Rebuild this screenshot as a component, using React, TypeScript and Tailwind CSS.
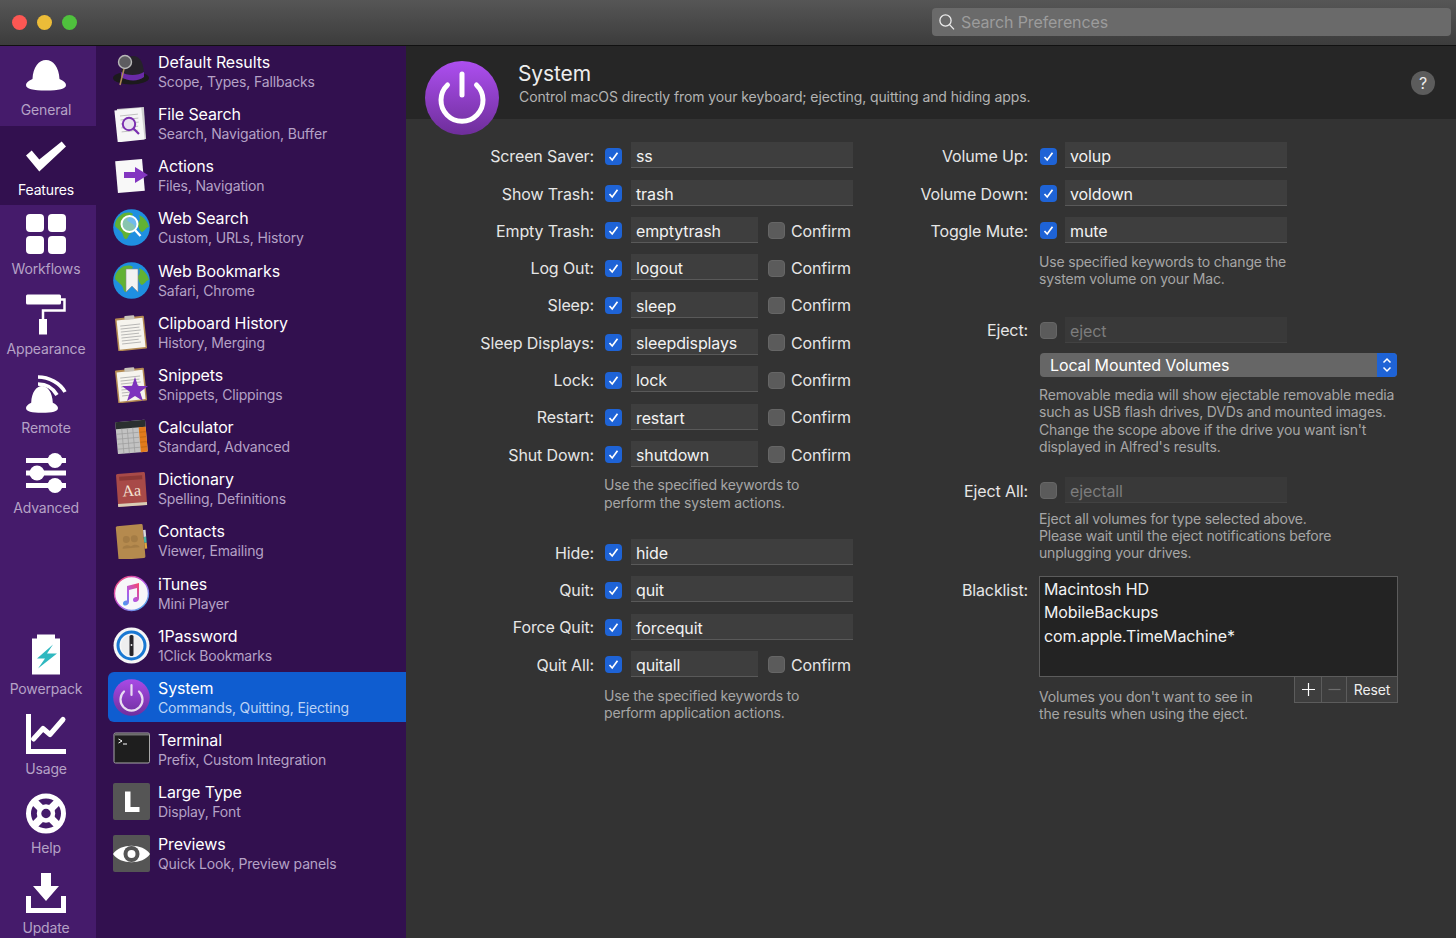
import React from 'react';

const HAT = 'M6.5 19C7 7 13 0 20 0C27 0 33 7 33.5 19C38 21 40 23 40 25C40 29 33 30.5 20 30.5C7 30.5 0 29 0 25C0 23 2 21 6.5 19Z';

const GeneralIcon = () => <path d={HAT} fill="white" transform="translate(3 8)" />;
const FeaturesIcon = () => <polygon points="3,23.5 8.7,18.5 16.3,27.5 38.7,9.5 43,14.5 16.3,39.5" fill="white" />;
const WorkflowsIcon = () => (
  <g fill="white">
    <rect x="3" y="3" width="18" height="18" rx="4" />
    <rect x="25" y="3" width="18" height="18" rx="4" />
    <rect x="3" y="25" width="18" height="18" rx="4" />
    <rect x="25" y="25" width="18" height="18" rx="4" />
  </g>
);
const AppearanceIcon = () => (
  <g>
    <rect x="3" y="3.5" width="35" height="10" rx="1.5" fill="white" />
    <path d="M38 8.5H41.5V19.5H20V28" fill="none" stroke="white" strokeWidth="2.5" />
    <rect x="16" y="28" width="8" height="15.5" fill="white" />
  </g>
);
const RemoteIcon = () => (
  <g>
    <path d={HAT} fill="white" transform="translate(3 16) scale(.8 .88)" />
    <path d="M15 7C26 7 37 13 42 22" fill="none" stroke="white" strokeWidth="3.6" />
    <path d="M15 14C23 14 30 18 34 25" fill="none" stroke="white" strokeWidth="3.6" />
  </g>
);
const AdvancedIcon = () => (
  <g fill="white">
    <rect x="3" y="8" width="40" height="5" />
    <rect x="3" y="20.5" width="40" height="5" />
    <rect x="3" y="33" width="40" height="5" />
    <circle cx="32" cy="10.5" r="7.5" />
    <circle cx="14" cy="23" r="7.5" />
    <circle cx="32" cy="35.5" r="7.5" />
  </g>
);
const PowerpackIcon = () => (
  <g>
    <path d="M14 3.5H32V7.5H37V43.5H9V7.5H14Z" fill="white" />
    <polygon points="30,13.5 14,27.5 22,27.5 15,37.5 34,22.5 24,22.5" fill="#2fb8c0" />
  </g>
);
const UsageIcon = () => (
  <g>
    <path d="M5.5 3V40.5H43" fill="none" stroke="white" strokeWidth="5" />
    <path d="M10.5 28L20 17.5L27 23.5L40 8.5" fill="none" stroke="white" strokeWidth="5" strokeLinecap="round" strokeLinejoin="round" />
  </g>
);
const HelpIcon = () => (
  <g fill="none" stroke="white">
    <circle cx="23" cy="23.5" r="17.5" strokeWidth="5" />
    <circle cx="23" cy="23.5" r="7" strokeWidth="4.5" />
    <path d="M11 11.5L17.5 18M35 11.5L28.5 18M11 35.5L17.5 29M35 35.5L28.5 29" strokeWidth="7.5" />
  </g>
);
const UpdateIcon = () => (
  <g>
    <polygon points="18,3 28,3 28,16 36,16 23,31 10,16 18,16" fill="white" />
    <path d="M5.5 26V40.5H40.5V26" fill="none" stroke="white" strokeWidth="5" />
  </g>
);

function Globe({ children }: { children?: React.ReactNode }) {
  return (
    <g>
      <circle cx="18.5" cy="18.5" r="18.3" fill="#1f8fe0" />
      <path d="M8 6C12 3 17 3 20 5C19 8 15 8 14 11C16 14 21 14 22 18C22 23 17 23 15 28C13 32 11 30 10 26C9 22 4 20 2 17C2 12 4 9 8 6Z" fill="#62b233" />
      <path d="M26 6C31 8 35 13 36 18C33 18 32 22 29 23C26 22 26 17 24 15C26 13 28 11 26 6Z" fill="#62b233" />
      {children}
    </g>
  );
}

function Clipboard({ children }: { children?: React.ReactNode }) {
  return (
    <g transform="rotate(-6 18 19)">
      <rect x="3.5" y="3" width="29" height="33" rx="1" fill="#b48a52" />
      <rect x="5" y="5" width="26" height="29.5" fill="#f6f4ee" />
      <path d="M8 11H28M8 14H27M8 17H28M8 20H26M8 23H28M8 26H25M8 29H27" stroke="#a0a0a0" strokeWidth=".7" />
      <rect x="13" y="1.5" width="10" height="4" rx="1" fill="#c9c4bb" />
      {children}
    </g>
  );
}

const appIcons: Record<string, React.ReactNode> = {
  results: (
    <g>
      <ellipse cx="18" cy="25" rx="18" ry="6.5" fill="#1c1a1c" />
      <path d="M8 24C8 10 12 3 20 3C28 3 31 11 31 24C24 28 14 28 8 24Z" fill="#26222a" />
      <path d="M8 19C14 23 25 23 31 19V24C25 29 14 28 8 24Z" fill="#6a2aa8" />
      <path d="M11 16L7 32" stroke="#b08a58" strokeWidth="1.6" />
      <circle cx="12" cy="9" r="6.5" fill="#5d5c60" stroke="#b8b8b8" strokeWidth="1.4" />
    </g>
  ),
  file: (
    <g>
      <rect x="5" y="3" width="27" height="32" fill="#cfcfcf" transform="rotate(-4 18 19)" />
      <rect x="3" y="4" width="27" height="32" fill="#f6f6f6" transform="rotate(-6 17 20)" />
      <path d="M8 10H26M8 14H26M8 18H26M8 22H25M8 26H24" stroke="#b5b5b5" strokeWidth=".8" transform="rotate(-6 17 20)" />
      <circle cx="16" cy="19" r="6.2" fill="#e9e2f0" stroke="#7b2fb0" strokeWidth="2" />
      <path d="M20.5 23.5L26 29" stroke="#7b2fb0" strokeWidth="2.2" />
    </g>
  ),
  actions: (
    <g>
      <rect x="3.5" y="3" width="27" height="32" fill="#f8f8f8" transform="rotate(-5 17 19)" />
      <polygon points="11,15 22,15 22,10 35,18 22,26 22,21 11,21" fill="#8336c0" />
    </g>
  ),
  web: (
    <Globe>
      <circle cx="16.5" cy="15" r="8" fill="#9ccff2" fillOpacity=".65" stroke="white" strokeWidth="2" />
      <path d="M22 21L27.5 27" stroke="white" strokeWidth="2.4" />
    </Globe>
  ),
  bookmarks: (
    <Globe>
      <polygon points="13,7 25,7 25,30 19,24 13,30" fill="#f2f2f2" stroke="#8a8a8a" strokeWidth=".6" />
    </Globe>
  ),
  clipboard: <Clipboard />,
  snippets: (
    <g>
      <Clipboard />
      <polygon points="22,11 25,20 35,20 27,26 30,35 22,30 14,35 17,26 9,20 19,20" fill="#7d32bd" />
    </g>
  ),
  calculator: (
    <g transform="rotate(-5 18 19)">
      <rect x="3.5" y="3" width="30" height="32" rx="1" fill="#c2c2c2" />
      <rect x="3.5" y="3" width="30" height="7" fill="#2a2f2f" />
      <rect x="26.5" y="10" width="7" height="25" fill="#e27a1c" />
      <path d="M4 15H26M4 20H26M4 25H26M4 30H26M9.5 10V35M15 10V35M20.5 10V35" stroke="#9c9c9c" strokeWidth=".7" />
      <path d="M27 15H33M27 20H33M27 25H33M27 30H33" stroke="#b86510" strokeWidth=".7" />
    </g>
  ),
  dictionary: (
    <g transform="rotate(-4 18 19)">
      <rect x="4" y="3" width="29" height="33" rx="1.5" fill="#a84a48" />
      <rect x="4" y="33" width="29" height="3" fill="#d9cdb5" />
      <rect x="7" y="6" width="23" height="4" fill="#8c3836" />
      <text x="18.5" y="26" textAnchor="middle" fontFamily="Liberation Serif, serif" fontSize="16" fill="#f6e4d4">Aa</text>
    </g>
  ),
  contacts: (
    <g transform="rotate(-5 18 19)">
      <rect x="4" y="3" width="27" height="34" rx="1.5" fill="#b58a4e" />
      <rect x="31" y="9" width="2.5" height="7" fill="#d9d9d9" />
      <rect x="31" y="16" width="2.5" height="6" fill="#4db3a2" />
      <rect x="31" y="22" width="2.5" height="6" fill="#e0a83a" />
      <circle cx="13.5" cy="17" r="3.5" fill="#a47c45" />
      <circle cx="21.5" cy="17" r="3.5" fill="#a47c45" />
      <path d="M9 26C9 22 18 22 18 26ZM17 26C17 22 26 22 26 26Z" fill="#a47c45" />
    </g>
  ),
  itunes: (
    <g>
      <defs>
        <linearGradient id="itRing" x1="0" y1="0" x2="1" y2="1">
          <stop offset="0" stopColor="#fa4d6b" />
          <stop offset=".5" stopColor="#b94fe0" />
          <stop offset="1" stopColor="#37c8f5" />
        </linearGradient>
        <linearGradient id="itNote" x1="1" y1="0" x2="0" y2="1">
          <stop offset="0" stopColor="#fb4468" />
          <stop offset=".55" stopColor="#b05be6" />
          <stop offset="1" stopColor="#3ba3f0" />
        </linearGradient>
      </defs>
      <circle cx="18.5" cy="18.5" r="17" fill="#f7f7f9" stroke="url(#itRing)" strokeWidth="1.4" />
      <path d="M14 11L26 8V23.5C26 26 23.5 27.5 21.5 27C19.5 26.5 19.5 23.5 21.5 22.5C22.5 22 23.5 22 24 22V13L16 15V27C16 29.5 13.5 31 11.5 30.5C9.5 30 9.5 27 11.5 26C12.5 25.5 13.5 25.5 14 25.5Z" fill="url(#itNote)" />
    </g>
  ),
  onepassword: (
    <g>
      <circle cx="18.5" cy="18.5" r="18" fill="#f6f6f6" />
      <circle cx="18.5" cy="18.5" r="13.5" fill="none" stroke="#1a78d2" strokeWidth="3" />
      <circle cx="18.5" cy="18.5" r="10.5" fill="#eeeeee" />
      <rect x="16.5" y="8" width="4" height="21" rx="1.5" fill="#27252a" />
      <circle cx="18.5" cy="18" r=".9" fill="#eeeeee" />
    </g>
  ),
  system: (
    <g>
      <defs>
        <linearGradient id="pwrSmall" x1="0" y1="0" x2="0" y2="1">
          <stop offset="0" stopColor="#a94ae6" />
          <stop offset="1" stopColor="#6f2f9e" />
        </linearGradient>
      </defs>
      <circle cx="18.5" cy="18.5" r="18.3" fill="url(#pwrSmall)" />
      <path d="M11 12.5A11 11 0 1 0 26 12.5" fill="none" stroke="#e8dcf2" strokeWidth="2.2" strokeLinecap="round" />
      <path d="M18.5 6V16" stroke="#e8dcf2" strokeWidth="2.2" strokeLinecap="round" />
    </g>
  ),
  terminal: (
    <g>
      <rect x="1" y="2" width="35.5" height="30" rx="1.5" fill="#1e1e1e" stroke="#a8a8a8" strokeWidth="1" />
      <rect x="1.5" y="2.5" width="34.5" height="2" fill="#6f6f6f" />
      <path d="M5.5 8L9 10L5.5 12M10 13H14" fill="none" stroke="white" strokeWidth="1" />
    </g>
  ),
  largetype: (
    <g>
      <rect x="0" y="0" width="37" height="37" rx="2" fill="#555555" />
      <path d="M12 8.5H17.5V24H26.5V29H12Z" fill="white" />
    </g>
  ),
  previews: (
    <g>
      <rect x="0" y="0" width="37" height="37" rx="2" fill="#555555" />
      <path d="M0 19C7 8 30 8 37 19C30 30 7 30 0 19Z" fill="white" />
      <circle cx="18.5" cy="19" r="8" fill="#555555" />
      <circle cx="18.5" cy="19" r="4" fill="white" />
    </g>
  ),
};

const topNav = [
  { label: 'General', icon: <GeneralIcon /> },
  { label: 'Features', icon: <FeaturesIcon />, active: true },
  { label: 'Workflows', icon: <WorkflowsIcon /> },
  { label: 'Appearance', icon: <AppearanceIcon /> },
  { label: 'Remote', icon: <RemoteIcon /> },
  { label: 'Advanced', icon: <AdvancedIcon /> },
];

const bottomNav = [
  { label: 'Powerpack', icon: <PowerpackIcon /> },
  { label: 'Usage', icon: <UsageIcon /> },
  { label: 'Help', icon: <HelpIcon /> },
  { label: 'Update', icon: <UpdateIcon /> },
];

const features = [
  { id: 'results', title: 'Default Results', sub: 'Scope, Types, Fallbacks' },
  { id: 'file', title: 'File Search', sub: 'Search, Navigation, Buffer' },
  { id: 'actions', title: 'Actions', sub: 'Files, Navigation' },
  { id: 'web', title: 'Web Search', sub: 'Custom, URLs, History' },
  { id: 'bookmarks', title: 'Web Bookmarks', sub: 'Safari, Chrome' },
  { id: 'clipboard', title: 'Clipboard History', sub: 'History, Merging' },
  { id: 'snippets', title: 'Snippets', sub: 'Snippets, Clippings' },
  { id: 'calculator', title: 'Calculator', sub: 'Standard, Advanced' },
  { id: 'dictionary', title: 'Dictionary', sub: 'Spelling, Definitions' },
  { id: 'contacts', title: 'Contacts', sub: 'Viewer, Emailing' },
  { id: 'itunes', title: 'iTunes', sub: 'Mini Player' },
  { id: 'onepassword', title: '1Password', sub: '1Click Bookmarks' },
  { id: 'system', title: 'System', sub: 'Commands, Quitting, Ejecting', selected: true },
  { id: 'terminal', title: 'Terminal', sub: 'Prefix, Custom Integration' },
  { id: 'largetype', title: 'Large Type', sub: 'Display, Font' },
  { id: 'previews', title: 'Previews', sub: 'Quick Look, Preview panels' },
];

function RailItem({ label, icon, active }: { label: string; icon: React.ReactNode; active?: boolean }) {
  return (
    <div className={active ? 'h-[79.5px] pr-1 pt-[6px] flex flex-col items-center bg-[#32104f]' : 'h-[79.5px] pr-1 pt-[6px] flex flex-col items-center'}>
      <svg width="46" height="46" viewBox="0 0 46 46" className="shrink-0">{icon}</svg>
      <span className={active ? 'mt-[3px] text-[14px] leading-[18px] tracking-[-0.16px] text-white' : 'mt-[3px] text-[14px] leading-[18px] tracking-[-0.16px] text-[#b5a2c6]'}>{label}</span>
    </div>
  );
}

function FeatureRow({ id, title, sub, selected }: { id: string; title: string; sub: string; selected?: boolean }) {
  return (
    <div className="h-[52.17px] ml-3 pb-[1.2px] flex items-center">
      <div className={selected ? 'w-full h-[50px] flex items-center pl-[5px] bg-[#0f5dd0] rounded-l-md' : 'w-full h-[50px] flex items-center pl-[5px]'}>
        <svg width="37" height="37" viewBox="0 0 37 37" className="shrink-0">{appIcons[id]}</svg>
        <div className="ml-2 flex flex-col">
          <span className="text-[16px] leading-[20px] text-white">{title}</span>
          <span className={selected ? 'mt-[1px] text-[14px] leading-[18px] tracking-[-0.16px] text-[#bcd3f5]' : 'mt-[1px] text-[14px] leading-[18px] tracking-[-0.16px] text-[#b5a2c6]'}>{sub}</span>
        </div>
      </div>
    </div>
  );
}

function Checkbox({ checked }: { checked?: boolean }) {
  return (
    <span className={checked ? 'w-[17px] h-[17px] rounded-[4px] bg-[#1e63d6] flex items-center justify-center shrink-0' : 'block w-[17px] h-[17px] rounded-[4px] bg-[#5b5b5b] border border-[#666666] shrink-0'}>
      {checked && (
        <svg width="13" height="13" viewBox="0 0 13 13">
          <path d="M2.5 7L5.2 10L10.5 2.8" fill="none" stroke="white" strokeWidth="1.7" />
        </svg>
      )}
    </span>
  );
}

function TextField({ value, short, disabled }: { value: string; short?: boolean; disabled?: boolean }) {
  const width = short ? 'w-[127px]' : 'w-[222px]';
  const tone = disabled ? 'text-[#7d7d7d] bg-[#393939] border-[#424242]' : 'text-[#f2f2f2] bg-[#3e3e3e] border-[#595959]';
  return <div className={width + ' ' + tone + ' h-[26px] mb-[1.5px] pl-[5px] border-b text-[16px] leading-[28px]'}>{value}</div>;
}

function LeftRow({ label, value, confirm }: { label: string; value: string; confirm?: boolean }) {
  return (
    <div className="h-[37.3px] flex items-center">
      <span className="w-[188px] text-right text-[16px] text-[#e6e6e6]">{label}</span>
      <span className="ml-[11px] mr-[9px]"><Checkbox checked /></span>
      <TextField value={value} short={confirm} />
      {confirm && (
        <div className="ml-[10px] flex items-center">
          <Checkbox />
          <span className="ml-[6px] text-[16px] text-[#e6e6e6]">Confirm</span>
        </div>
      )}
    </div>
  );
}

function RightRow({ label, value, checked = true }: { label: string; value: string; checked?: boolean }) {
  return (
    <div className="h-[37.3px] flex items-center">
      <span className="w-[129px] text-right text-[16px] text-[#e6e6e6]">{label}</span>
      <span className="ml-[12px] mr-[8px]"><Checkbox checked={checked} /></span>
      <TextField value={value} disabled={!checked} />
    </div>
  );
}

function Help({ className, children }: { className: string; children: React.ReactNode }) {
  return <p className={className + ' text-[14px] leading-[17.3px] tracking-[-0.17px] text-[#a6a6a6] whitespace-pre-line'}>{children}</p>;
}

export default function App() {
  return (
    <div className="w-[1456px] h-[938px] overflow-hidden flex flex-col bg-[#333333] font-[Inter,sans-serif] tracking-[-0.12px]">
      <header className="h-[46px] shrink-0 flex items-center pl-3 pr-[5px] pb-[1px] border-b border-[#111111] bg-gradient-to-b from-[#565656] to-[#3c3c3c]">
        <span className="w-[15px] h-[15px] rounded-full bg-[#fc5753]" />
        <span className="ml-[10px] w-[15px] h-[15px] rounded-full bg-[#ecbc38]" />
        <span className="ml-[10px] w-[15px] h-[15px] rounded-full bg-[#4fc13d]" />
        <div className="ml-auto w-[519px] h-[28px] rounded-[4px] bg-[#6a6a6a] flex items-center pl-[6px]">
          <svg width="18" height="18" viewBox="0 0 18 18" className="shrink-0">
            <circle cx="7.5" cy="7.5" r="5.6" fill="none" stroke="#ececec" strokeWidth="1.3" />
            <path d="M11.6 11.6L16 16.4" stroke="#ececec" strokeWidth="1.3" />
          </svg>
          <span className="ml-[5px] text-[16px] text-[#9c9c9c]">Search Preferences</span>
        </div>
      </header>

      <div className="flex-1 flex min-h-0">
        <nav className="w-[96px] shrink-0 flex flex-col justify-between bg-[#451b6b]">
          <div>
            {topNav.map((item) => <RailItem key={item.label} {...item} />)}
          </div>
          <div className="-mb-[5px]">
            {bottomNav.map((item) => <RailItem key={item.label} {...item} />)}
          </div>
        </nav>

        <aside className="w-[310px] shrink-0 bg-[#32104f]">
          {features.map((item) => <FeatureRow key={item.id} {...item} />)}
        </aside>

        <main className="flex-1 min-w-0 flex flex-col">
          <div className="h-[73px] shrink-0 flex items-start bg-[#262626]">
            <svg width="74" height="74" viewBox="0 0 74 74" className="ml-[19px] mt-[15px] shrink-0 relative">
              <defs>
                <linearGradient id="pwrBig" x1="0" y1="0" x2="0" y2="1">
                  <stop offset="0" stopColor="#ad4ff0" />
                  <stop offset="1" stopColor="#6e2e9a" />
                </linearGradient>
              </defs>
              <circle cx="37" cy="37" r="37" fill="url(#pwrBig)" />
              <path d="M22.5 24A21 21 0 1 0 51.5 24" fill="none" stroke="white" strokeWidth="5" strokeLinecap="round" />
              <path d="M37 13V34" stroke="white" strokeWidth="5" strokeLinecap="round" />
            </svg>
            <div className="ml-[19px] mt-[14px] flex flex-col">
              <span className="text-[21px] leading-[28px] text-[#eeeeee]">System</span>
              <span className="ml-[1px] text-[14px] leading-[18px] tracking-[-0.09px] text-[#b3b3b3]">Control macOS directly from your keyboard; ejecting, quitting and hiding apps.</span>
            </div>
            <span className="ml-auto mr-[21px] mt-[25px] w-[24px] h-[24px] rounded-full bg-[#5c5c5c] text-[#ececec] text-[16px] leading-[24px] text-center">?</span>
          </div>

          <div className="flex-1 flex pt-[18.6px] min-h-0">
            <section className="w-[493px] shrink-0">
              <LeftRow label="Screen Saver:" value="ss" />
              <LeftRow label="Show Trash:" value="trash" />
              <LeftRow label="Empty Trash:" value="emptytrash" confirm />
              <LeftRow label="Log Out:" value="logout" confirm />
              <LeftRow label="Sleep:" value="sleep" confirm />
              <LeftRow label="Sleep Displays:" value="sleepdisplays" confirm />
              <LeftRow label="Lock:" value="lock" confirm />
              <LeftRow label="Restart:" value="restart" confirm />
              <LeftRow label="Shut Down:" value="shutdown" confirm />
              <Help className="ml-[198px] mt-[3px]">{'Use the specified keywords to\nperform the system actions.'}</Help>
              <div className="mt-[23.4px]">
                <LeftRow label="Hide:" value="hide" />
                <LeftRow label="Quit:" value="quit" />
                <LeftRow label="Force Quit:" value="forcequit" />
                <LeftRow label="Quit All:" value="quitall" confirm />
              </div>
              <Help className="ml-[198px] mt-[3.5px]">{'Use the specified keywords to\nperform application actions.'}</Help>
            </section>

            <section className="flex-1 min-w-0">
              <RightRow label="Volume Up:" value="volup" />
              <RightRow label="Volume Down:" value="voldown" />
              <RightRow label="Toggle Mute:" value="mute" />
              <Help className="ml-[140px] mt-[3.6px]">{'Use specified keywords to change the\nsystem volume on your Mac.'}</Help>
              <div className="mt-[24px]">
                <RightRow label="Eject:" value="eject" checked={false} />
              </div>
              <div className="ml-[141px] mt-[4.4px] w-[357px] h-[24px] rounded-[4px] bg-[#666666] flex items-center overflow-hidden">
                <span className="ml-[10px] text-[16px] text-white">Local Mounted Volumes</span>
                <span className="ml-auto w-[20px] h-full bg-[#1e63d6] flex items-center justify-center">
                  <svg width="12" height="18" viewBox="0 0 12 18">
                    <path d="M2.5 6.5L6 3L9.5 6.5M2.5 11.5L6 15L9.5 11.5" fill="none" stroke="white" strokeWidth="1.5" />
                  </svg>
                </span>
              </div>
              <Help className="ml-[140px] mt-[8.6px]">{"Removable media will show ejectable removable media\nsuch as USB flash drives, DVDs and mounted images.\nChange the scope above if the drive you want isn't\ndisplayed in Alfred's results."}</Help>
              <div className="mt-[17.2px]">
                <RightRow label="Eject All:" value="ejectall" checked={false} />
              </div>
              <Help className="ml-[140px]">{'Eject all volumes for type selected above.\nPlease wait until the eject notifications before\nunplugging your drives.'}</Help>
              <div className="mt-[14.2px] flex items-start">
                <span className="w-[129px] text-right text-[16px] leading-[28px] text-[#e6e6e6]">Blacklist:</span>
                <div className="ml-[11px] w-[359px]">
                  <div className="h-[101px] border border-[#5c5c5c] bg-[#232323] px-[4px] pt-[1px] text-[16px] leading-[23.6px] text-[#f2f2f2]">
                    <div>Macintosh HD</div>
                    <div>MobileBackups</div>
                    <div>com.apple.TimeMachine*</div>
                  </div>
                  <div className="flex items-start justify-between">
                    <Help className="mt-[11px]">{"Volumes you don't want to see in\nthe results when using the eject."}</Help>
                    <div className="flex h-[26px] border border-t-0 border-[#5c5c5c] bg-[#3e3e3e]">
                      <span className="w-[27px] flex items-center justify-center border-r border-[#5c5c5c]">
                        <svg width="15" height="15" viewBox="0 0 15 15"><path d="M7.5 1V14M1 7.5H14" stroke="white" strokeWidth="1.2" /></svg>
                      </span>
                      <span className="w-[25px] flex items-center justify-center border-r border-[#5c5c5c]">
                        <svg width="15" height="15" viewBox="0 0 15 15"><path d="M1.5 7.5H13.5" stroke="#6e6e6e" strokeWidth="1.2" /></svg>
                      </span>
                      <span className="w-[50px] text-center text-[14px] leading-[25px] text-[#eeeeee]">Reset</span>
                    </div>
                  </div>
                </div>
              </div>
            </section>
          </div>
        </main>
      </div>
    </div>
  );
}
